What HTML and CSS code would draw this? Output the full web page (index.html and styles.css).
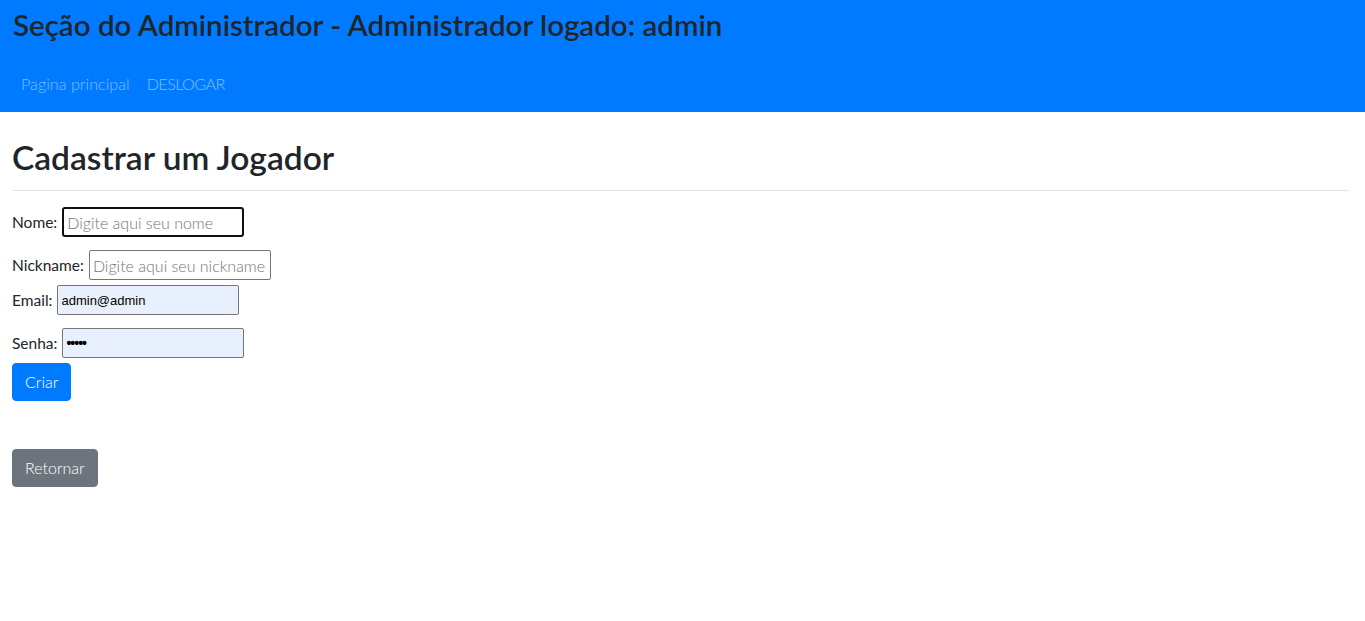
FILE: index.html
```html
<!DOCTYPE html>
<html lang="pt-BR">
<head>
<meta charset="utf-8">
<title>Cadastrar um Jogador</title>
<link rel="stylesheet" href="styles.css">
</head>
<body>
<header class="topbar">
  <h2 class="topbar-title">Seção do Administrador - Administrador logado: admin</h2>
  <nav class="topbar-nav">
    <a class="nav-link" href="#">Pagina principal</a>
    <a class="nav-link nav-caps" href="#">DESLOGAR</a>
  </nav>
</header>
<main class="page">
  <h1 class="page-title">Cadastrar um Jogador</h1>
  <hr class="divider">
  <form class="player-form">
    <div class="field field-nome"><label>Nome:</label><input class="input input-focus" type="text" placeholder="Digite aqui seu nome"></div>
    <div class="field field-nick"><label>Nickname:</label><input class="input" type="text" placeholder="Digite aqui seu nickname"></div>
    <div class="field field-email"><label>Email:</label><input class="input input-auto" type="text" value="admin@admin"></div>
    <div class="field field-senha"><label>Senha:</label><input class="input input-auto input-pass" type="password" value="admin"></div>
    <button class="btn btn-primary" type="button">Criar</button>
  </form>
  <button class="btn btn-secondary btn-back" type="button">Retornar</button>
</main>
</body>
</html>
```

FILE: styles.css
```css
html, body {
  margin: 0;
  padding: 0;
}
body {
  font-family: Lato, "Open Sans", sans-serif;
  color: #212529;
  background: #fff;
  font-size: 16px;
}
.topbar {
  background: #007bff;
  height: 112px;
  box-sizing: border-box;
  padding: 7px 13px 0;
}
.topbar-title {
  margin: 0;
  font-size: 29.5px;
  font-weight: 600;
  line-height: 36px;
  color: #212529;
}
.topbar-nav {
  display: flex;
  margin-top: 21px;
}
.nav-link {
  color: rgba(255, 255, 255, 0.5);
  text-decoration: none;
  padding: 8px 8px;
  font-size: 16.2px;
  line-height: 24px;
  font-weight: 300;
}
.nav-link + .nav-link {
  padding-left: 9px;
}
.nav-caps {
  letter-spacing: -0.6px;
}
.page {
  padding: 0 16px 0 12px;
}
.page-title {
  margin: 0;
  padding-top: 24px;
  font-size: 33.5px;
  font-weight: 600;
  line-height: 42px;
}
.divider {
  margin: 12px 0 16px;
  border: 0;
  border-top: 1px solid rgba(0, 0, 0, 0.1);
}
.player-form {
  display: flex;
  flex-direction: column;
  align-items: flex-start;
}
.field {
  display: flex;
  align-items: center;
  height: 30px;
  font-size: 15.5px;
}
.field label {
  margin-right: 5px;
}
.field-nick { margin-top: 13px; }
.field-email { margin-top: 5px; }
.field-senha { margin-top: 13px; }
.input {
  box-sizing: border-box;
  width: 182px;
  height: 30px;
  border: 1px solid #767676;
  border-radius: 2px;
  padding: 1px 3px;
  font-family: Lato, "Open Sans", sans-serif;
  font-size: 16px;
  font-weight: 300;
  color: #212529;
  background: #fff;
  outline: none;
}
.input::placeholder {
  color: #757575;
}
.input-focus {
  border: 2px solid #101010;
  border-radius: 3px;
}
.input-auto {
  background: #e8f0fe;
  font-family: "Liberation Sans", Arial, sans-serif;
  font-size: 13px;
  font-weight: 400;
  color: #000;
}
.input-pass {
  font-size: 14px;
  font-weight: 700;
  letter-spacing: -1px;
}
.btn {
  display: inline-block;
  font-family: Lato, "Open Sans", sans-serif;
  font-size: 16px;
  font-weight: 300;
  line-height: 24px;
  padding: 6px 12px;
  border: 1px solid transparent;
  border-radius: 4px;
  color: #fff;
  cursor: pointer;
}
.btn-primary {
  background: #007bff;
  border-color: #007bff;
  margin-top: 5px;
}
.btn-secondary {
  background: #6c757d;
  border-color: #6c757d;
}
.btn-back {
  margin-top: 48px;
}
```
